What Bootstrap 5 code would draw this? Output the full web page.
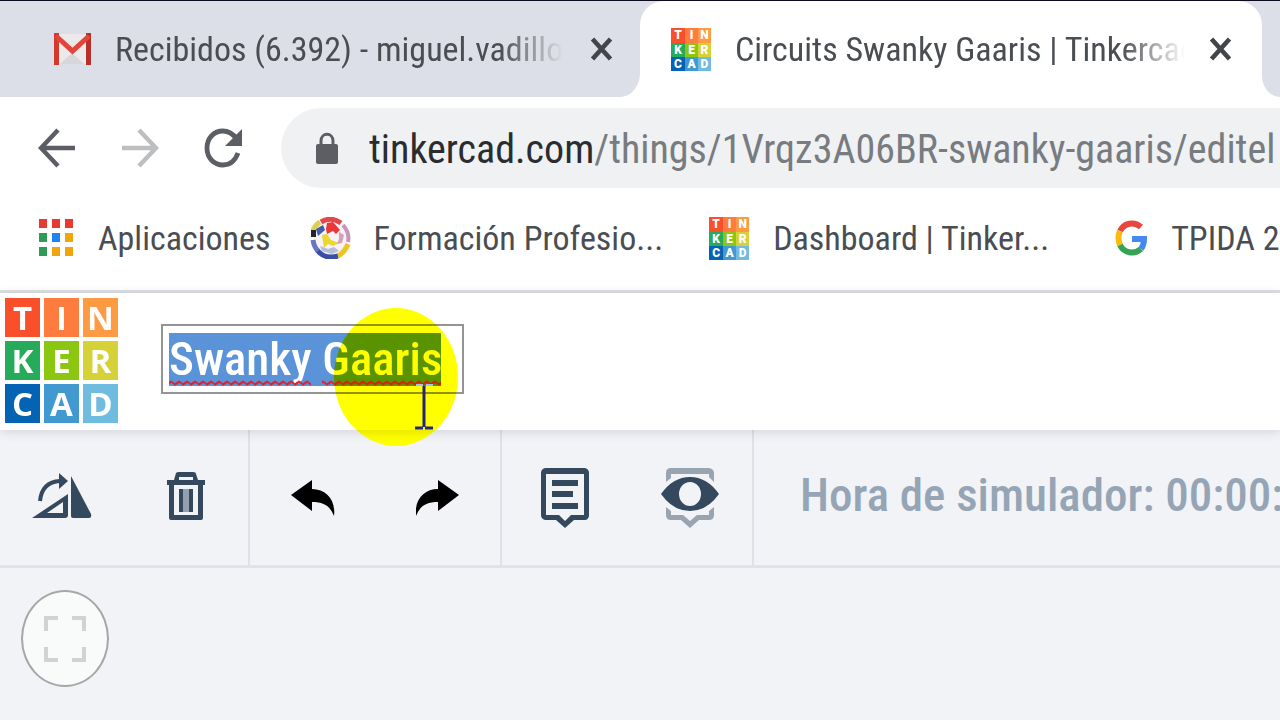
<!DOCTYPE html>
<html lang="es">
<head>
<meta charset="utf-8">
<meta name="viewport" content="width=device-width, initial-scale=1">
<title>Circuits Swanky Gaaris | Tinkercad</title>
<link href="https://cdn.jsdelivr.net/npm/bootstrap@5.3.0/dist/css/bootstrap.min.css" rel="stylesheet">
<style>
  body { font-family: "Roboto Condensed", Roboto, sans-serif; font-size: 34px; line-height: 40px; color: #4a4d52; background: #f1f3f7; overflow: hidden; }
  svg { display: block; flex: none; }
  button { flex: none; }
  .plain-btn { border: 0; background: none; padding: 0; color: inherit; }

  .tinker-logo { display: grid; flex: none; color: #fff; text-align: center; text-decoration: none; font-family: "Open Sans", sans-serif; }
  .tinker-logo span:nth-child(1) { background: #f9502b; }
  .tinker-logo span:nth-child(2) { background: #fd7c3e; }
  .tinker-logo span:nth-child(3) { background: #fd9a42; }
  .tinker-logo span:nth-child(4) { background: #26ab5b; }
  .tinker-logo span:nth-child(5) { background: #8bc611; }
  .tinker-logo span:nth-child(6) { background: #d5d137; }
  .tinker-logo span:nth-child(7) { background: #0563b3; }
  .tinker-logo span:nth-child(8) { background: #4199cf; }
  .tinker-logo span:nth-child(9) { background: #70bbe0; }
  .logo-small { grid-template-columns: 14px 13px 13px; grid-template-rows: 15px 14px 14px; font-family: Roboto, sans-serif; font-size: 12px; font-weight: 900; line-height: 14px; }
  .logo-large { grid-template-columns: repeat(3, 35px); grid-auto-rows: 39px; gap: 4px; font-size: 33px; font-weight: 700; line-height: 40px; }

  .tab-strip { background: #fff; border-top: 1px solid #0c0a1c; height: 97px; }
  .tab-idle { background: #dcdfe7; }
  .tab-first { width: 50%; padding: 0 27px 0 54px; border-bottom-right-radius: 20px 24px; }
  .tab-rest { border-bottom-left-radius: 20px 24px; }
  .tab-shell { width: 622px; background: linear-gradient(#dcdfe7 40px, #fff 40px); }
  .tab-open { background: #fff; border-radius: 24px 24px 0 0; padding: 0 30px 0 31px; }
  .tab-title { min-width: 0; margin-right: 24px; -webkit-mask-image: linear-gradient(to right, #000 86%, transparent); mask-image: linear-gradient(to right, #000 86%, transparent); }

  .nav-row { background: #fff; padding: 11px 0 12px 38px; }
  .nav-row button + button { margin-left: 45px; }
  .omnibox { background: #eff1f3; border-radius: 40px 0 0 40px; height: 80px; padding-left: 35px; margin-left: 39px; min-width: 0; }
  .url-text { font-size: 40px; line-height: 48px; color: #787b80; margin-left: 31px; padding-top: 3px; }
  .url-text span { color: #2b2c30; }

  .bookmarks { background: #fff; height: 93px; padding: 0 0 14px 38px; border-bottom: 3px solid #dedfe4; }
  .bookmarks a { color: #4a4d52; text-decoration: none; white-space: nowrap; flex: none; }
  .bookmarks a + a { margin-left: 40px; }
  .bookmarks a:nth-child(3) { margin-left: 46px; }
  .bookmarks a:last-child { margin-left: 66px; }
  .ball { margin-right: -3px; }

  .app-head { background: #fff; height: 137px; padding: 0 5px 2px; box-shadow: 0 2px 10px rgba(60, 60, 90, .16); position: relative; z-index: 1; }
  .title-box { border: 2px solid #949494; padding: 7px 21px 6px 6px; margin: 0 0 4px 43px; position: relative; }
  .title-input { border: 0; border-radius: 0; padding: 0 0 2px; width: 272px; height: 53px; background: #5a93d8; color: #fff; font-size: 47px; font-weight: 500; line-height: 51px; outline: 0; }
  .squiggle { position: absolute; left: 6px; bottom: 6px; }
  .halo { position: absolute; left: 171px; top: -18px; width: 124px; height: 138px; border-radius: 50%; background: #ff0; mix-blend-mode: multiply; }
  .beam { position: absolute; left: 252px; top: 58px; }

  .tool-bar { height: 138px; border-bottom: 3px solid #e0e1e9; color: #34495e; }
  .tool-group { border-right: 2px solid #dfe0e8; }
  .tool-group button { width: 125px; display: grid; place-items: center; }
  .tool-group:first-child button { width: 124px; padding-bottom: 3px; }
  .sim-time { font-size: 47px; line-height: 56px; font-weight: 500; color: #95a5b5; padding: 0 0 5px 46px; }
  .fit-btn { width: 88px; height: 97px; border: 2px solid #a5a8a9; border-radius: 50%; background: #f9fafa; display: grid; place-items: center; margin: 22px 0 0 21px; }
</style>
</head>
<body>
<svg width="0" height="0" class="position-absolute" aria-hidden="true">
  <symbol id="cross" viewBox="0 0 22 24"><path d="M2 2l18 20M20 2L2 22" stroke="#424549" stroke-width="4.600" fill="none"/></symbol>
</svg>

<header>
  <div class="tab-strip d-flex">
    <div class="tab-idle tab-first d-flex align-items-center">
      <svg width="37" height="32" viewBox="0 0 37 32"><path fill="#ece9ea" d="M2 1h33v30H2z"/><path fill="#d9d6d9" d="M6 31l12-11 12 11z"/><path fill="#d5382c" d="M0 0h5v32H0z"/><path fill="#b8302a" d="M32 0h5v32h-5z"/><path d="M2 3l16.500 15L35 3" fill="none" stroke="#e0463a" stroke-width="5"/></svg>
      <span class="tab-title text-nowrap overflow-hidden ms-4">Recibidos (6.392) - miguel.vadillo</span>
      <button class="plain-btn ms-auto" aria-label="Cerrar"><svg width="23" height="24"><use href="#cross"/></svg></button>
    </div>
    <div class="tab-shell d-flex flex-shrink-0">
      <div class="tab-open d-flex align-items-center w-100">
        <div class="tinker-logo logo-small"><span>T</span><span>I</span><span>N</span><span>K</span><span>E</span><span>R</span><span>C</span><span>A</span><span>D</span></div>
        <span class="tab-title text-nowrap overflow-hidden ms-4">Circuits Swanky Gaaris | Tinkercac</span>
        <button class="plain-btn ms-auto" aria-label="Cerrar"><svg width="23" height="24"><use href="#cross"/></svg></button>
      </div>
    </div>
    <div class="tab-idle tab-rest flex-grow-1"></div>
  </div>

  <div class="nav-row d-flex align-items-center">
    <button class="plain-btn" aria-label="Atrás"><svg width="38" height="40" viewBox="0 0 38 40"><path d="M37 20H3M20 2L3 20l17 18" fill="none" stroke="#5b5e64" stroke-width="4.500"/></svg></button>
    <button class="plain-btn" aria-label="Adelante"><svg width="38" height="40" viewBox="0 0 38 40"><path d="M1 20h34M18 2l17 18-17 18" fill="none" stroke="#bcbec0" stroke-width="4.500"/></svg></button>
    <button class="plain-btn" aria-label="Recargar"><svg width="38" height="40" viewBox="0 0 38 40"><path d="M34 25C31 33 26 37 19 37 10 37 3 30 3 20S10 3 19 3c6 0 10 3 14 8" fill="none" stroke="#5b5e64" stroke-width="4.800"/><path fill="#5b5e64" d="M38 1v17H21z"/></svg></button>
    <div class="omnibox d-flex align-items-center flex-grow-1">
      <svg width="22" height="32" viewBox="0 0 22 32"><rect y="12" width="22" height="20" rx="2" fill="#5c5e63"/><path d="M5 14V9c0-9 12-9 12 0v5" fill="none" stroke="#5c5e63" stroke-width="3"/></svg>
      <div class="url-text text-nowrap overflow-hidden"><span>tinkercad.com</span>/things/1Vrqz3A06BR-swanky-gaaris/editel</div>
    </div>
  </div>

  <nav class="bookmarks d-flex align-items-center overflow-hidden">
    <a href="#" class="d-flex align-items-center">
      <svg width="36" height="38" viewBox="0 0 36 38"><path fill="#e8382f" d="M1 0h8v9H1zM14 0h8v9h-8zM27 0h8v9h-8z"/><path fill="#2f9b56" d="M1 14h8v9H1zM1 28h8v9H1z"/><path fill="#1f85ee" d="M14 14h8v9h-8z"/><path fill="#efa50c" d="M27 14h8v9h-8zM14 28h8v9h-8zM27 28h8v9h-8z"/></svg>
      <span class="ms-4">Aplicaciones</span>
    </a>
    <a href="#" class="d-flex align-items-center">
      <svg class="ball" width="42" height="42" viewBox="0 0 42 42"><circle cx="21" cy="21" r="18" fill="#f6f2f5"/><g fill="none" stroke-width="5"><path d="M10 5Q5 8 3 14" stroke="#d9cf54"/><path d="M11 5Q21-1 31 6" stroke="#e54748"/><path d="M33 8q7 8 5 17" stroke="#c795bd" stroke-width="4"/><path d="M38 27q-3 8-10 12" stroke="#f0c320"/><path d="M28 39Q15 43 7 33" stroke="#394fa6"/><path d="M3 23q1 7 5 11" stroke="#6976bb"/></g><path fill="#20242d" d="M1 13h5v7H1z"/><path fill="#405eac" d="M6 12l7-4 2 5-7 6z"/><path fill="#e93838" d="M17 6l6-1 7 8-4 4-3-3-6 3-1-5z"/><path fill="#ecd632" d="M12 18l5-1 4 6 8 3-6 3-5-2-4 4-1-6z"/><path fill="#d8a0b8" d="M29 15l5 3-2 8-5 1 2-5z"/><path fill="#b4bde0" d="M10 29l8 3 6-2 5 4-7 3-10-3z"/></svg>
      <span class="ms-4">Formación Profesio...</span>
    </a>
    <a href="#" class="d-flex align-items-center">
      <div class="tinker-logo logo-small"><span>T</span><span>I</span><span>N</span><span>K</span><span>E</span><span>R</span><span>C</span><span>A</span><span>D</span></div>
      <span class="ms-4">Dashboard | Tinker...</span>
    </a>
    <a href="#" class="d-flex align-items-center">
      <svg width="32" height="36" viewBox="0 0 32 36"><g fill="none" stroke-width="6"><path d="M5 11C9 3 19 1 26 7" stroke="#e8453c"/><path d="M5 25Q2 18 5 11" stroke="#fbbb0d"/><path d="M5 25c4 8 14 10 21 4" stroke="#34a353"/><path d="M26 29q3-4 3-10H17" stroke="#4688f1"/></g></svg>
      <span class="ms-4">TPIDA 2</span>
    </a>
  </nav>
</header>

<main>
  <div class="app-head d-flex align-items-center">
    <a href="#" class="tinker-logo logo-large" aria-label="Tinkercad"><span>T</span><span>I</span><span>N</span><span>K</span><span>E</span><span>R</span><span>C</span><span>A</span><span>D</span></a>
    <div class="title-box">
      <input class="title-input d-block" type="text" value="Swanky Gaaris" aria-label="Nombre del diseño" spellcheck="false">
      <svg class="squiggle" width="272" height="6"><defs><pattern id="wave" width="8" height="6" patternUnits="userSpaceOnUse"><path d="M-1 4.500L2 1.500 6 4.500 9 2" fill="none" stroke="#d4263c" stroke-width="2"/></pattern></defs><path fill="url(#wave)" d="M0 0h142v6H0zM153 0h119v6H153z"/></svg>
      <div class="halo"></div>
      <svg class="beam" width="18" height="46" viewBox="0 0 18 46"><path d="M1 1h7M11 1h7" stroke="#9cc8f0" stroke-width="2"/><path d="M9 2v41M0 44h8M10 44h8" fill="none" stroke="#27247c" stroke-width="3"/></svg>
    </div>
  </div>

  <div class="tool-bar d-flex align-items-stretch">
    <div class="tool-group d-flex">
      <button class="plain-btn" aria-label="Girar"><svg width="60" height="48" viewBox="0 0 60 48"><path fill="#34495e" fill-rule="evenodd" d="M0 46L36 22v21q0 3-3 3zM15 41h16V30z"/><path fill="#34495e" d="M39 4l20 38q1 4-2 4H41q-2 0-2-2z"/><path d="M8 29Q10 10 28 9" fill="none" stroke="#34495e" stroke-width="4"/><path fill="#34495e" d="M27 1l9 8-9 8z"/></svg></button>
      <button class="plain-btn" aria-label="Eliminar"><svg width="40" height="50" viewBox="0 0 40 50"><path fill="#34495e" fill-rule="evenodd" d="M8 9l2-7q1-1 3-1h14q3 0 3 2l2 6h7v5h-2v33q0 2-2 2H5q-2 0-2-2V14H1V9zM13 9h14V6H13zM8 14v30h24V14z"/><path fill="#94a0ad" d="M17 18h7v23h-7z"/><path fill="#34495e" d="M13 18h4v23h-4zM23 18h4v23h-4z"/></svg></button>
    </div>
    <div class="tool-group d-flex">
      <button class="plain-btn" aria-label="Deshacer"><svg width="44" height="38" viewBox="0 0 44 38"><path id="bend" d="M0 16L21 1v9c14 0 24 11 22 27-4-10-10-14-22-14v9z"/></svg></button>
      <button class="plain-btn" aria-label="Rehacer"><svg width="44" height="38" viewBox="0 0 44 38"><use href="#bend" transform="translate(43 0) scale(-1 1)"/></svg></button>
    </div>
    <div class="tool-group d-flex">
      <button class="plain-btn" aria-label="Notas"><svg width="48" height="60" viewBox="0 0 48 60"><path fill="#34495e" fill-rule="evenodd" d="M4 0h40q4 1 4 5v43q-1 4-4 4H33l-9 8-9-8H4q-4-1-4-5V5q0-4 4-5zM5 6v41h13l6 6 6-6h13V6z"/><path fill="#34495e" d="M11 12h26v6H11zM11 23h21v6H11zM11 35h26v6H11z"/></svg></button>
      <button class="plain-btn" aria-label="Mostrar notas"><svg width="58" height="60" viewBox="0 0 58 60"><path fill="#98a4b0" d="M5 14V5q0-5 5-5h38q5 1 5 5v9L48 9V6H10v4zM5 39v8q0 5 5 5h10l9 8 9-8h10q5 0 5-5v-8l-5 4v4H36l-7 6-7-6H10v-4z"/><path fill="#34495e" fill-rule="evenodd" d="M0 26Q12 9 29 9t29 17Q46 43 29 43T0 26zm18 0a11 12 0 0 0 22 0 11 12 0 0 0-22 0z"/></svg></button>
    </div>
    <div class="sim-time align-self-center text-nowrap">Hora de simulador: 00:00:</div>
  </div>

  <button class="fit-btn" aria-label="Ajustar a la vista"><svg width="42" height="46" viewBox="0 0 42 46"><path d="M2 15V2h12M28 2h12v13M40 31v13H28M14 44H2V31" fill="none" stroke="#d2d2d2" stroke-width="4"/></svg></button>
</main>
<script src="https://cdn.jsdelivr.net/npm/bootstrap@5.3.0/dist/js/bootstrap.bundle.min.js"></script>
</body>
</html>
